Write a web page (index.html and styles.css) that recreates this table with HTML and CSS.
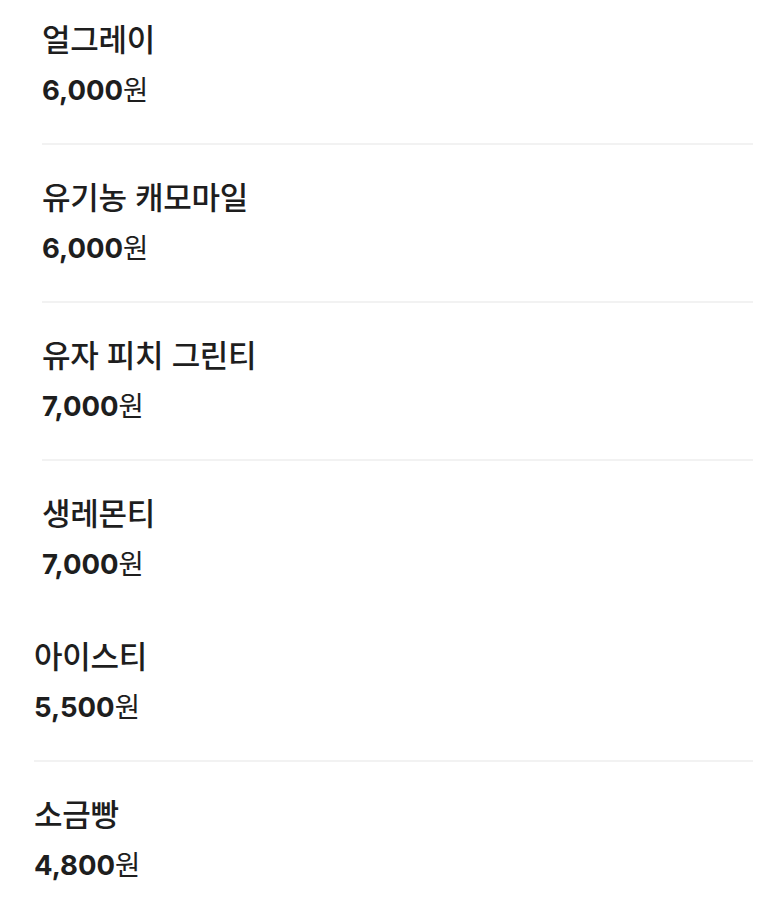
FILE: index.html
```html
<!DOCTYPE html>
<html lang="ko">
<head>
<meta charset="utf-8">
<link rel="stylesheet" href="styles.css">
</head>
<body>
<section class="menu">
  <div class="item">
    <div class="name">얼그레이</div>
    <div class="price"><b>6,000</b>원</div>
  </div>
  <div class="item">
    <div class="name">유기농 캐모마일</div>
    <div class="price"><b>6,000</b>원</div>
  </div>
  <div class="item">
    <div class="name">유자 피치 그린티</div>
    <div class="price"><b>7,000</b>원</div>
  </div>
  <div class="item last">
    <div class="name">생레몬티</div>
    <div class="price"><b>7,000</b>원</div>
  </div>
</section>
<section class="menu shifted">
  <div class="item">
    <div class="name">아이스티</div>
    <div class="price"><b>5,500</b>원</div>
  </div>
  <div class="item last">
    <div class="name">소금빵</div>
    <div class="price"><b>4,800</b>원</div>
  </div>
</section>
</body>
</html>
```
FILE: styles.css
```css
html, body {
  margin: 0;
  padding: 0;
  background: #ffffff;
}

body {
  font-family: "Inter", "Noto Sans CJK KR", sans-serif;
  color: #1e1e1e;
  height: 907px;
  overflow: hidden;
}

.menu {
  display: flex;
  flex-direction: column;
  padding: 0 14px 0 42px;
}

.menu.shifted {
  padding-left: 34px;
}

.item {
  display: flex;
  flex-direction: column;
  gap: 15px;
  padding: 32px 0 35px;
  border-bottom: 2px solid #f2f2f2;
}

.item:first-child {
  padding-top: 19px;
}

.item.last {
  border-bottom: none;
}

.name {
  font-family: "Noto Sans CJK KR", sans-serif;
  font-size: 31px;
  line-height: 38px;
  font-weight: 500;
  letter-spacing: -0.3px;
}

.price {
  display: flex;
  align-items: baseline;
  font-family: "Inter", "Noto Sans CJK KR", sans-serif;
  font-size: 27.5px;
  line-height: 36px;
  font-weight: 400;
}

.price b {
  font-weight: 700;
}
```
